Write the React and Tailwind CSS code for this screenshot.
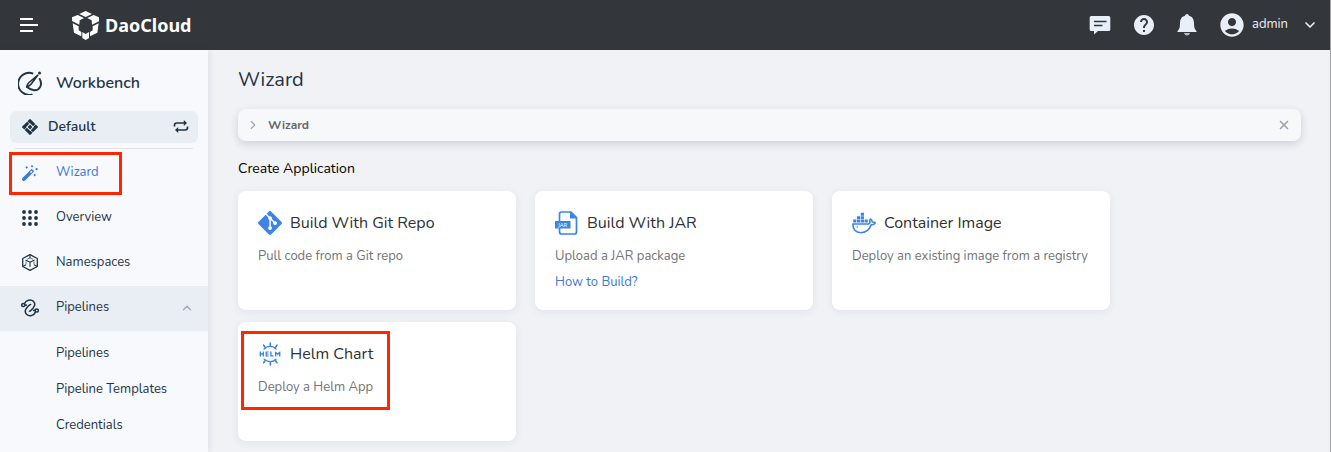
import React from "react";
import { SiGit, SiHelm } from "react-icons/si";
import { MdHelp, MdAccountCircle } from "react-icons/md";
import { ChevronDown, ChevronRight, ChevronUp, X } from "lucide-react";

const Logo = () => (
  <svg className="h-[29px] w-[27px]" viewBox="0 0 81 87" fill="#fff" aria-hidden="true">
    <path d="M41 0 60 9 41 18 22 9Z" />
    <path d="M17 12 36 21 23 28 22 41 0 30V19Z" />
    <path d="M65 12 46 21 59 28 60 41 82 30V19Z" />
    <path d="M2 37 20 46V58L28 63V76L6 65Z" />
    <path d="M80 37 62 46V58L54 63V76L76 65Z" />
    <path d="M31 63 41 69 51 63V81L41 87 31 81Z" />
  </svg>
);

const WorkbenchIcon = () => (
  <svg className="size-6" viewBox="0 0 24 24" fill="none" stroke="currentColor" strokeWidth="1.9" aria-hidden="true">
    <path d="M15.200 2.600A11 11 0 1 0 14.500 23.300" />
    <path d="M21.300 7.300C25.300 13.800 21.500 19.600 16 19.200 13.500 19 11 17.800 8.800 15.800" />
    <path d="M19.800 4.200 11 11.500Q9 13.500 8.600 15.900 11 15.500 13 13.300Z" strokeWidth="1.600" strokeLinejoin="round" />
    <circle cx="21.500" cy="2" r="1.500" fill="currentColor" stroke="none" />
  </svg>
);

const WorkspaceIcon = () => (
  <svg className="size-4" viewBox="0 0 16 16" fill="currentColor" aria-hidden="true">
    <g transform="rotate(45 8 8)">
      <path d="M2.200 2.200H9.700V5.200H5V5.800H2.200ZM13.800 2.200V9.700H10.800V5H10.200V2.200ZM13.800 13.800H6.300V10.800H11V10.200H13.800ZM2.200 13.800V6.300H5.200V11H5.800V13.800Z" />
      <path d="M6.300 6.300h3.400v3.400H6.300z" />
    </g>
  </svg>
);

const SwapIcon = () => (
  <svg className="size-4" viewBox="0 0 16 16" fill="none" stroke="currentColor" strokeWidth="1.700" aria-hidden="true">
    <path d="M1.500 7.500V6.200Q1.500 4 3.700 4H12M14.500 7.500v1.300Q14.500 11 12.300 11H4.500" />
    <path d="M10.800 1 14 4 10.800 7ZM5.200 8 2 11 5.200 14Z" fill="currentColor" stroke="none" />
  </svg>
);

const WandIcon = () => (
  <svg className="size-4" viewBox="0 0 16 16" fill="currentColor" aria-hidden="true">
    <path d="M9.700 3.800 12.200 6.300 3.100 15.500Q1.700 16.600.6 15.400-.5 14.200.5 13Z" />
    <path d="M9.400 5.600 10.500 6.700 9 8.200 7.900 7.100Z" fill="#dfeafc" />
    <path d="M4.700 1.100 6 2.400 4.700 3.700 3.400 2.400ZM10 0 11.300 1.300 10 2.600 8.700 1.300ZM14.600 2.700 16 4.100 14.600 5.500 13.200 4.100ZM12.700 8.800 14 10.100 12.700 11.400 11.400 10.100Z" />
  </svg>
);

const GridIcon = () => (
  <svg className="size-4" viewBox="0 0 16 16" fill="currentColor" aria-hidden="true">
    {[2, 8, 14].map((y) => [2, 8, 14].map((x) => <circle key={`${x}-${y}`} cx={x} cy={y} r="1.900" />))}
  </svg>
);

const CubeIcon = () => (
  <svg className="h-[17px] w-4" viewBox="0 0 16 17" fill="none" stroke="currentColor" strokeLinejoin="round" aria-hidden="true">
    <path d="M8 .7 15.300 4.500V12.500L8 16.300.7 12.500V4.500Z" strokeWidth="1.300" />
    <path d="M3.500 6 8 8.300 12.500 6M8 8.300V13M8 .7V4M.7 12.500 4 10.800M15.300 12.500 12 10.800" strokeWidth="1.100" />
    <path d="M5 5.300 8 4 11 5.300M4 7.500V10.500M12 7.500V10.500" strokeWidth=".7" />
  </svg>
);

const PipelineIcon = () => (
  <svg className="size-[18px]" viewBox="0 0 18 18" fill="none" stroke="currentColor" strokeWidth="1.500" aria-hidden="true">
    <circle cx="2.300" cy="6" r="1.600" />
    <circle cx="15.700" cy="11.500" r="1.600" />
    <path d="M3.400 4.700C4.800 1 9.800 -.2 12.500 2.400 14.800 4.900 13.600 7.400 12 9.200L9.800 11.500Q8.900 12.600 8 11.900" />
    <path d="M14.600 12.900C13 16.800 8.200 17.800 5.500 15.300 3.200 12.800 4.400 10.300 6 8.500L8.400 6.100Q9.300 5 10.200 5.700" />
    <path d="M3.900 6.200 6 5.900M12 11.600 14.100 11.300" />
  </svg>
);

const ChatIcon = () => (
  <svg className="size-[22px]" viewBox="0 0 22 20" fill="#e9eff8" aria-hidden="true">
    <path d="M2.300 1H19.700Q21.300 1 21.300 2.600V14.500Q21.300 16 19.700 16H9L5 19.500V16H2.300Q.7 16 .7 14.500V2.600Q.7 1 2.300 1Z" />
    <path d="M5 6.500H17.500M5 10.500H13.500" stroke="#33363b" strokeWidth="1.700" />
  </svg>
);

const BellIcon = () => (
  <svg className="size-[22px]" viewBox="0 0 22 22" fill="#e9eff8" aria-hidden="true">
    <path d="M11 0Q12.600 0 13 1.800C16.500 2.700 18 5.500 18 9.500 18 13.500 18.800 15.500 20.500 17V18H1.500V17C3.200 15.500 4 13.500 4 9.500 4 5.500 5.500 2.700 9 1.800Q9.400 0 11 0Z" />
    <path d="M7.800 19H14.200Q13 21.600 11 21.600T7.800 19Z" fill="#b7bdc6" />
  </svg>
);

const JarIcon = () => (
  <svg className="size-6" viewBox="0 0 24 24" aria-hidden="true">
    <path d="M16 1H6.500Q4.500 1 4.500 3V21Q4.500 23 6.500 23H19.500Q21.500 23 21.500 21V6.500Z" fill="#fff" stroke="#3d84e5" strokeWidth="1.700" />
    <path d="M15 .5V7.500H22Z" fill="#3d84e5" />
    <rect y="10" width="15.500" height="7.500" fill="#3d84e5" />
    <text x="7.700" y="16.100" textAnchor="middle" fontSize="6" fill="#fff" fontFamily="Open Sans, sans-serif">JAR</text>
  </svg>
);

const DockerIcon = () => (
  <svg className="size-6" viewBox="0 -1 24 24" fill="#3d84e5" aria-hidden="true">
    <path d="M1.200 7.600h3.200v3H1.200zM5 7.600h3.200v3H5zM8.800 7.600H12v3H8.800zM12.600 7.600h3.200v3h-3.200zM5 4.200h3.200v2.900H5zM8.800 4.200H12v2.900H8.800zM8.800.7H12v3H8.800z" />
    <path d="M.9 12H16.500Q18.500 11.600 17.700 9 17.500 7.900 18.500 7 20.300 8 20.200 10 22 9.900 23.300 10.800 22.300 12.700 19.200 12.900C17 18.500 13.500 20.700 8.800 20.700 3.500 20.700.7 17.300.9 12Z" fill="none" stroke="#3d84e5" strokeWidth="1.600" strokeLinejoin="round" />
    <circle cx="5.200" cy="15" r=".8" />
  </svg>
);

function NavItem({ icon, label, active, children, className = "" }) {
  return (
    <a
      href="#"
      className={`relative flex h-[45px] items-center pb-[2px] pl-[21px] pr-[14px] ${active ? "text-[#3f78d4]" : ""} ${className}`}
    >
      <span className="flex w-[18px] shrink-0 justify-center">{icon}</span>
      <span className="ml-[17px] flex-1">{label}</span>
      {children}
    </a>
  );
}

function Card({ icon, title, description, children }) {
  return (
    <article className="relative h-[119px] w-[278px] rounded-lg bg-white p-5 shadow-[0_2px_8px_rgba(40,50,80,0.08)]">
      <h3 className="flex h-6 items-center gap-2 text-base text-[#303133]">
        {icon}
        {title}
      </h3>
      <p className="mt-2 leading-[26px] text-[#737373]">{description}</p>
      {children}
    </article>
  );
}

export default function App() {
  return (
    <div className="flex min-h-screen flex-col border-r border-[#a0a2a5] bg-[#f1f2f6] font-['Nunito','Open_Sans',sans-serif] text-[13px] text-[#1f3545]">
      <header className="flex h-[50px] items-center bg-[#33363b] pl-5 pr-3 text-[#e9eff8]">
        <button aria-label="Toggle menu">
          <svg className="h-[14px] w-[18px]" viewBox="0 0 18 14" stroke="#fff" strokeWidth="1.800" aria-hidden="true">
            <path d="M0 1H13M0 7H18M0 13H13" />
          </svg>
        </button>
        <a href="#" className="ml-[34px] flex items-center gap-[6px] font-['Noto_Sans',sans-serif] text-lg font-bold leading-6 text-white">
          <Logo />
          DaoCloud
        </a>
        <div className="ml-auto flex items-center">
          <button aria-label="Messages" className="mr-[21px]"><ChatIcon /></button>
          <button aria-label="Help" className="mr-5"><MdHelp className="size-6" /></button>
          <button aria-label="Notifications" className="mr-5"><BellIcon /></button>
          <button className="flex items-center">
            <MdAccountCircle className="size-7" />
            <span className="ml-[6px] mr-[14px]">admin</span>
            <ChevronDown className="size-4" strokeWidth={2.500} />
          </button>
        </div>
      </header>

      <div className="flex flex-1">
        <aside className="w-52 shrink-0 bg-[#f7f9fd] shadow-[2px_0_6px_rgba(30,40,60,0.08)]">
          <div className="flex h-[61px] items-center gap-[14px] pl-[18px] pt-1 text-base font-semibold">
            <WorkbenchIcon />
            Workbench
          </div>
          <button className="mx-[10px] flex h-8 w-[188px] items-center rounded-md bg-[#e9eef5] pl-3 pr-[9px] text-sm font-semibold">
            <WorkspaceIcon />
            <span className="ml-[10px] flex-1 text-left">Default</span>
            <SwapIcon />
          </button>
          <hr className="mx-[15px] mb-[2px] mt-[5px] border-[#dfe3e9]" />
          <nav>
            <NavItem icon={<WandIcon />} label="Wizard" active>
              <span className="pointer-events-none absolute bottom-px left-[9px] top-px w-[113px] border-[3px] border-[#ff2600]" />
            </NavItem>
            <NavItem icon={<GridIcon />} label="Overview" />
            <NavItem icon={<CubeIcon />} label="Namespaces" />
            <NavItem icon={<PipelineIcon />} label="Pipelines" className="bg-[#e9eef5]">
              <ChevronUp className="size-[14px] text-[#a5abb5]" strokeWidth={2.500} />
            </NavItem>
            <div className="pt-[5px]">
              {["Pipelines", "Pipeline Templates", "Credentials"].map((label) => (
                <a key={label} href="#" className="flex h-9 items-center pl-14">{label}</a>
              ))}
            </div>
          </nav>
        </aside>

        <main className="min-w-0 flex-1 pb-[11px] pl-[30px] pr-[29px]">
          <h1 className="flex h-[59px] items-center text-xl">Wizard</h1>
          <div className="flex h-8 items-center rounded-lg bg-[#f7f8fa] pl-2 pr-[10px] text-xs font-bold text-[#666] shadow-[0_3px_8px_rgba(30,40,60,0.16)]">
            <ChevronRight className="size-[14px] text-[#a0a5ad]" />
            <span className="ml-2 flex-1">Wizard</span>
            <button aria-label="Close"><X className="size-[14px] text-[#a0a5b0]" strokeWidth={3} /></button>
          </div>
          <h2 className="mt-[18px] text-sm leading-5 text-black">Create Application</h2>
          <section className="mt-3 flex flex-wrap gap-x-[19px] gap-y-3">
            <Card icon={<SiGit className="size-6 text-[#3d84e5]" />} title="Build With Git Repo" description="Pull code from a Git repo" />
            <Card icon={<JarIcon />} title="Build With JAR" description="Upload a JAR package">
              <a href="#" className="block leading-[26px] text-[#3f78d4]">How to Build?</a>
            </Card>
            <Card icon={<DockerIcon />} title="Container Image" description="Deploy an existing image from a registry" />
            <Card icon={<SiHelm className="size-6 text-[#3d84e5]" />} title="Helm Chart" description="Deploy a Helm App">
              <span className="pointer-events-none absolute left-[3px] top-[9px] h-[79px] w-[149px] border-[3px] border-[#ff2600]" />
            </Card>
          </section>
        </main>
      </div>
    </div>
  );
}
